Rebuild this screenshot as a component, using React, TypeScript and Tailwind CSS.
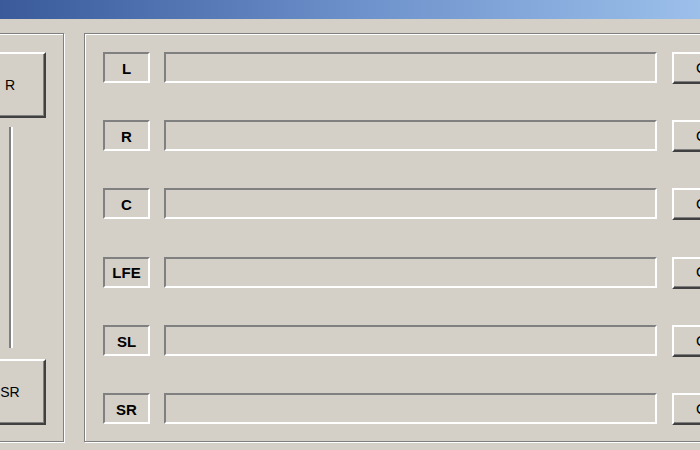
import React from 'react';

const channels = ['L', 'R', 'C', 'LFE', 'SL', 'SR'];

const sunken = 'border-2 border-t-[#808080] border-l-[#808080] border-b-white border-r-white';
const raised =
  'border-2 border-t-white border-l-white border-b-[#404040] border-r-[#404040] shadow-[inset_-1px_-1px_0_#808080]';
const groupBox = 'border border-[#808080] shadow-[inset_1px_1px_0_#fff,1px_1px_0_#fff]';

function ChannelRow({ name }: { name: string }) {
  return (
    <div className="flex h-[31px] items-stretch">
      <div
        className={`${sunken} flex w-[47px] shrink-0 items-center justify-center pt-[3px] text-[15px] font-bold text-black`}
      >
        {name}
      </div>
      <div className={`${sunken} ml-[14px] w-[493px] shrink-0`} />
      <button
        className={`${raised} ml-[15px] flex h-[32px] w-[68px] shrink-0 items-center justify-center text-[15px] text-black`}
      >
        On
      </button>
    </div>
  );
}

export default function App() {
  return (
    <div
      className="flex h-[450px] w-[700px] flex-col overflow-hidden bg-[#d4d0c8]"
      style={{ fontFamily: '"Liberation Sans", Arial, sans-serif' }}
    >
      <div className="h-[19px] shrink-0 bg-gradient-to-r from-[#3a5a9a] via-[#6c90ca] to-[#9cc0ea]" />

      <div className="flex gap-[20px] pt-[14px]">
        {/* speaker side column */}
        <div className={`${groupBox} ml-[-40px] flex h-[409px] w-[104px] shrink-0 flex-col`}>
          <button
            className={`${raised} ml-[13px] mt-[18px] flex h-[66px] w-[72px] items-center justify-center text-[14px] text-black`}
          >
            R
          </button>
          <div className="ml-[48px] mt-[9px] h-[221px] w-[4px] border-l-2 border-r-2 border-l-[#808080] border-r-white" />
          <button
            className={`${raised} ml-[13px] mt-[11px] flex h-[66px] w-[72px] items-center justify-center text-[14px] text-black`}
          >
            SR
          </button>
        </div>

        {/* channel levels */}
        <div className={`${groupBox} flex h-[409px] w-[700px] shrink-0 flex-col gap-[37.2px] pl-[18px] pt-[18px]`}>
          {channels.map((c) => (
            <ChannelRow key={c} name={c} />
          ))}
        </div>
      </div>
    </div>
  );
}
